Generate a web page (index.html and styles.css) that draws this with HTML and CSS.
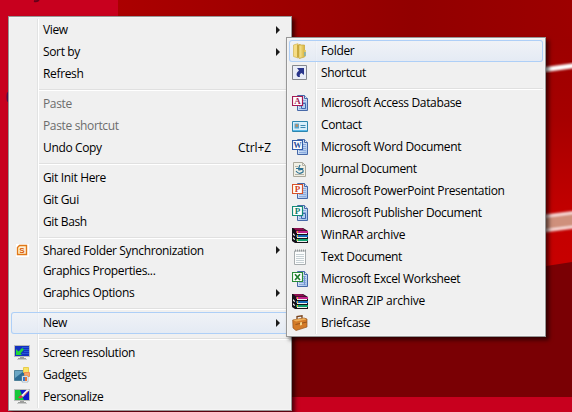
FILE: index.html
```html
<!DOCTYPE html>
<html lang="en">
<head>
<meta charset="utf-8">
<title>Desktop</title>
<link rel="stylesheet" href="styles.css">
</head>
<body>
<svg class="wallpaper" width="572" height="412" viewBox="0 0 572 412" aria-hidden="true">
  <defs>
    <linearGradient id="top" x1="0" x2="1"><stop offset="0" stop-color="#ab0000"/><stop offset=".65" stop-color="#920000"/><stop offset="1" stop-color="#9d0000"/></linearGradient>
    <linearGradient id="side" x1="0" x2="0" y1="0" y2="1"><stop offset="0" stop-color="#9c0000"/><stop offset=".35" stop-color="#a60000"/><stop offset=".75" stop-color="#c20000"/><stop offset="1" stop-color="#c80000"/></linearGradient>
    <filter id="soft" x="-20%" y="-50%" width="140%" height="200%"><feGaussianBlur stdDeviation=".8"/></filter>
  </defs>
  <rect width="572" height="412" fill="#c8001e"/>
  <rect x="118" width="454" height="397" fill="#7a0004"/>
  <rect x="118" width="454" height="60" fill="url(#top)"/>
  <path d="M540 37H572V262L540 267Z" fill="url(#side)"/>
  <path d="M540 70.300L576 65.300" stroke="#fff" stroke-width="5" filter="url(#soft)"/>
  <g filter="url(#soft)">
    <path d="M540 224L576 219.500" stroke="#d8807a" stroke-width="18"/>
    <path d="M540 224L576 219.500" stroke="#cf907c" stroke-width="12"/>
    <path d="M540 217L576 212.500M540 231L576 226.500" stroke="#ffe4e2" stroke-width="2.400"/>
  </g>
  <path d="M34 1Q38 2 39-1" stroke="#65001a" stroke-width="2" fill="none"/>
  <ellipse cx="8" cy="97" rx="1.500" ry="5" fill="#501050"/>
</svg>

<svg width="0" height="0" class="defs" aria-hidden="true">
  <defs>
    <linearGradient id="paper" x1="0" y1="0" x2="1" y2="1"><stop offset="0" stop-color="#fff"/><stop offset="1" stop-color="#9cbde8"/></linearGradient>
    <linearGradient id="gold" x1="0" x2="1"><stop offset="0" stop-color="#f8e89c"/><stop offset="1" stop-color="#d9b53e"/></linearGradient>
    <symbol id="sheet" viewBox="0 0 16 16">
      <path d="M5.500.5H12.500L15.500 3.500V15.500H5.500Z" fill="url(#paper)" stroke="#4668a8"/>
      <path d="M12.500.5V3.500H15.500" fill="#dce8fa" stroke="#4668a8"/>
      <path d="M7 5.500H14M7 7.500H14M7 9.500H14M7 11.500H14M7 13.500H14" stroke="#8cabdf"/>
    </symbol>
    <symbol id="books" viewBox="0 0 16 16">
      <path d="M0 1H11L16 4V16H3L0 14Z" fill="#141018"/>
      <path d="M1 1H10L14 3.500H4Z" fill="#8c1050"/>
      <path d="M4 4H16V6H4Z" fill="#c0208a"/><path d="M5 6.500H15" stroke="#eee"/>
      <path d="M1 6L3 8V9L1 8ZM1 10L3 12V13L1 12Z" fill="#eee"/>
      <path d="M4 8H16V10H4Z" fill="#1468b8"/><path d="M5 10.500H15" stroke="#eee"/>
      <path d="M4 12H16V14H4Z" fill="#10a070"/><path d="M5 14.500H15" stroke="#eee"/>
      <path d="M5 4H6V6H5ZM5 8H6V10H5ZM5 12H6V14H5Z" fill="#d8b020"/>
    </symbol>
    <symbol id="monitor" viewBox="0 0 16 16">
      <path d="M.5.5H15.500V11.500H.5Z" fill="#1430c0" stroke="#b8bcb8"/>
      <path d="M6 12H10V13H12V14H4V13H6Z" fill="#9c9e9c"/><path d="M3 14.500H13" stroke="#c8caca"/>
    </symbol>
  </defs>
</svg>

<nav class="menu main">
  <div class="item"><span class="label">View</span><i class="arrow"></i></div>
  <div class="item"><span class="label">Sort by</span><i class="arrow"></i></div>
  <div class="item"><span class="label">Refresh</span></div>
  <hr>
  <div class="item disabled"><span class="label">Paste</span></div>
  <div class="item disabled"><span class="label">Paste shortcut</span></div>
  <div class="item"><span class="label">Undo Copy</span><span class="key">Ctrl+Z</span></div>
  <hr>
  <div class="item"><span class="label">Git Init Here</span></div>
  <div class="item"><span class="label">Git Gui</span></div>
  <div class="item"><span class="label">Git Bash</span></div>
  <hr class="tight">
  <div class="item shared">
    <svg class="icon" viewBox="0 0 16 16"><path d="M2 2H15V15H2Z" fill="#fff"/><path d="M5.500 3.500H12.500V12.500H3.500V5.500Z" fill="#fff0d0" stroke="#e07818" stroke-width="1.400"/><text x="5.300" y="11" class="glyph small" fill="#d85808">S</text></svg>
    <span class="label">Shared Folder Synchronization</span><i class="arrow"></i></div>
  <div class="item"><span class="label">Graphics Properties...</span></div>
  <div class="item"><span class="label">Graphics Options</span><i class="arrow"></i></div>
  <hr>
  <div class="item active"><span class="label">New</span><i class="arrow"></i></div>
  <hr>
  <div class="item">
    <svg class="icon" viewBox="0 0 16 16"><use href="#monitor"/><path d="M8 2.500H15M10 4.500H15M10 6.500H15M8 8.500H15" stroke="#2458d8"/><path d="M2 4V10H8L6.500 8.500L10 4.500L8 3L4.500 6.500Z" fill="#20d838"/></svg>
    <span class="label">Screen resolution</span></div>
  <div class="item">
    <svg class="icon" viewBox="0 0 16 16"><path d="M.5 3.500H10.500V13.500H.5Z" fill="#2c6c94" stroke="#4e8098"/><path d="M1 4H10L1 11Z" fill="#6aa6c4"/><path d="M9.500.5H14.500V5.500H9.500Z" fill="#f8e468" stroke="#e8cc48"/><path d="M10.500 5.500H15.500V9.500H10.500Z" fill="#f8a868" stroke="#f08c50"/><path d="M8 9H14V15H8Z" fill="#fff" stroke="#789cb0" stroke-width=".6"/><path d="M9 10H11V14H9Z" fill="#3878c8"/><path d="M11 10H13V14H11Z" fill="#e87030"/></svg>
    <span class="label">Gadgets</span></div>
  <div class="item">
    <svg class="icon" viewBox="0 0 16 16"><use href="#monitor"/><path d="M1 1H8V6L10 11H1Z" fill="#18c838"/><path d="M6 1H15V11H10Z" fill="#1018c8"/><path d="M7 6.500L13 .5L15.500 1L9 8Z" fill="#f4f4f4"/><path d="M10 6.500L14 2.500" stroke="#d83838"/><path d="M4 8.500L7 6L9 8L6 9.500Z" fill="#e03050"/></svg>
    <span class="label">Personalize</span></div>
</nav>

<nav class="menu sub">
  <div class="item active">
    <svg class="icon" viewBox="0 0 16 16"><path d="M1.500 2L6 .7V15L1.500 13.500Z" fill="#f5dc84" stroke="#d2b450" stroke-width=".7"/><path d="M5 2L8.500 1V15.500L5 14Z" fill="#c9a93e"/><path d="M7 2H12.500V14L7 15.500Z" fill="url(#gold)" stroke="#c8a63a" stroke-width=".7"/><path d="M12.500 7H14V13.500H12.500Z" fill="#e9cf70"/><path d="M13 9V13" stroke="#48a0dc"/></svg>
    <span class="label">Folder</span></div>
  <div class="item">
    <svg class="icon" viewBox="0 0 16 16"><path d="M.5.5H14.500V14.500H.5Z" fill="#e9edf7" stroke="#85888e"/><path d="M5 3H12V10L9.500 8Q7 9 8 12H6Q2.500 9 7 5.500Z" fill="#29358b"/></svg>
    <span class="label">Shortcut</span></div>
  <hr>
  <div class="item">
    <svg class="icon" viewBox="0 0 16 16"><use href="#sheet"/><path d="M9.500 8.500H13.500V13.500H9.500Z" fill="#b4d0f0" stroke="#3e68b0"/><path d="M.5 1.500H10.500V10.500H.5Z" fill="#fff" stroke="#a41b55" stroke-width="1.200"/><text x="2.200" y="9" class="glyph" fill="#a41b55">A</text></svg>
    <span class="label">Microsoft Access Database</span></div>
  <div class="item">
    <svg class="icon" viewBox="0 0 16 16"><path d="M.5 4.500H15.500V14.500H.5Z" fill="#d8effb" stroke="#2d86ae"/><path d="M1 13.500H15" stroke="#58b8e8"/><path d="M2.500 6.500H7V11.500H2.500Z" fill="#56a7d0"/><circle cx="4.800" cy="8.500" r="1.500" fill="#b48c68"/><path d="M8.500 8.500H13.500M8.500 10.500H13.500" stroke="#3c88b0"/></svg>
    <span class="label">Contact</span></div>
  <div class="item">
    <svg class="icon" viewBox="0 0 16 16"><use href="#sheet"/><path d="M.5 1.500H10.500V10.500H.5Z" fill="#fff" stroke="#315ba9" stroke-width="1.200"/><text x="1.500" y="9" class="glyph wide" fill="#254d9c">W</text></svg>
    <span class="label">Microsoft Word Document</span></div>
  <div class="item">
    <svg class="icon" viewBox="0 0 16 16"><path d="M1.500 1.500H10.500L13.500 4.500V15.500H1.500Z" fill="#f1f0e5" stroke="#aaa89b"/><path d="M10.500 1.500V4.500H13.500M3 5.500H6M9 7.500H12M3 13.500H12" fill="none" stroke="#b4b2a8"/><path d="M4 7.500H11M8 4Q6 8 7 9Q12 7 11 11Q7 14 4 10" fill="none" stroke="#286f94" stroke-width="1.200"/></svg>
    <span class="label">Journal Document</span></div>
  <div class="item">
    <svg class="icon" viewBox="0 0 16 16"><use href="#sheet"/><path d="M.5 1.500H10.500V10.500H.5Z" fill="#fff" stroke="#d75228" stroke-width="1.200"/><text x="2.800" y="9" class="glyph" fill="#d1431c">P</text></svg>
    <span class="label">Microsoft PowerPoint Presentation</span></div>
  <div class="item">
    <svg class="icon" viewBox="0 0 16 16"><use href="#sheet"/><path d="M9.500 8.500H13.500V13.500H9.500Z" fill="#b4d0f0" stroke="#3e68b0"/><path d="M.5 1.500H10.500V10.500H.5Z" fill="#fff" stroke="#158b77" stroke-width="1.200"/><text x="2.800" y="9" class="glyph" fill="#087e6a">P</text></svg>
    <span class="label">Microsoft Publisher Document</span></div>
  <div class="item">
    <svg class="icon" viewBox="0 0 16 16"><use href="#books"/></svg>
    <span class="label loose">WinRAR archive</span></div>
  <div class="item">
    <svg class="icon" viewBox="0 0 16 16"><path d="M2.500 2H13.500V15.500H2.500Z" fill="#fcfdfd" stroke="#a8adaf"/><path d="M3 1.500H14" stroke="#92989a" stroke-dasharray="1 1" stroke-width="2"/><path d="M4 5.500H12M4 7.500H12M4 9.500H12M4 11.500H12M4 13.500H12" stroke="#c6d0d4"/></svg>
    <span class="label">Text Document</span></div>
  <div class="item">
    <svg class="icon" viewBox="0 0 16 16"><use href="#sheet"/><path d="M12.500 5V14" stroke="#7094d0"/><path d="M.5 1.500H10.500V10.500H.5Z" fill="#fff" stroke="#288b36" stroke-width="1.200"/><path d="M3 3.300L8 9M8 3.300L3 9" stroke="#207d2e" stroke-width="1.700"/></svg>
    <span class="label">Microsoft Excel Worksheet</span></div>
  <div class="item">
    <svg class="icon" viewBox="0 0 16 16"><use href="#books"/></svg>
    <span class="label loose">WinRAR ZIP archive</span></div>
  <div class="item">
    <svg class="icon" viewBox="0 0 16 16"><path d="M5 4V1.500L10 .8V4" fill="none" stroke="#77421b" stroke-width="1.300"/><path d="M.7 5L12 3L15 4V12L4 15.500L1 13Z" fill="#d47b28" stroke="#94551f" stroke-width=".7"/><path d="M1 5L12 3.300L14.500 4.500L4 6.500Z" fill="#efb05b"/><path d="M3.500 9.500L15 7" stroke="#9a551b"/><path d="M8 7.500L10 7V10L8 10.500Z" fill="#f3d388"/></svg>
    <span class="label loose">Briefcase</span></div>
</nav>
</body>
</html>
```
FILE: styles.css
```css
* {
  box-sizing: border-box;
}

body {
  margin: 0;
  width: 572px;
  height: 412px;
  overflow: hidden;
  position: relative;
  font: 12px/22px "Open Sans", "Noto Sans", sans-serif;
  letter-spacing: -0.35px;
  color: #000;
}

.wallpaper {
  display: block;
}

.defs {
  position: absolute;
}

.menu {
  position: absolute;
  padding: 2px;
  border: 1px solid #979797;
  background: linear-gradient(90deg, transparent 28px, #e2e3e3 28px, #e2e3e3 29px, #fff 29px, #fff 30px, transparent 30px) 0 2px / 100% calc(100% - 4px) no-repeat #f0f0f0;
  box-shadow: inset 0 0 0 1px #f5f5f5, 3px 3px 4px rgba(0, 0, 0, 0.6);
}

.main {
  left: 8px;
  top: 16px;
  width: 284px;
  height: 395px;
}

.sub {
  left: 286px;
  top: 37px;
  width: 260px;
  height: 300px;
}

.item {
  display: flex;
  align-items: center;
  height: 22px;
  padding: 0 8px 0 32px;
  border-radius: 3px;
  white-space: nowrap;
}

.item.active {
  background: linear-gradient(rgba(240, 243, 248, 0.8), rgba(225, 233, 245, 0.8));
  box-shadow: inset 0 0 0 1px #aecff7;
}

.item.disabled {
  color: #6d6d6d;
}

.item.shared {
  height: 20px;
}

.icon {
  flex: none;
  width: 16px;
  height: 16px;
  margin: 0 13px 0 -29px;
}

.label {
  flex: 1;
}

.label.loose {
  letter-spacing: -0.22px;
}

.shared .label {
  align-self: flex-start;
}

.key {
  margin-right: 10px;
  letter-spacing: -0.1px;
}

.arrow {
  border: 4px solid transparent;
  border-left-color: #1b1b1b;
  border-right: 0;
  margin-right: 1px;
}

hr {
  height: 2px;
  margin: 4px 0 2px 28px;
  border: 0;
  border-top: 1px solid #e0e0e0;
  background: #fff;
}

hr.tight {
  margin-bottom: 1px;
}

.glyph {
  font: bold 9px "Liberation Serif", serif;
  letter-spacing: 0;
}

.glyph.wide {
  font-size: 8px;
}

.glyph.small {
  font: bold 8px "Liberation Sans", sans-serif;
}
```
